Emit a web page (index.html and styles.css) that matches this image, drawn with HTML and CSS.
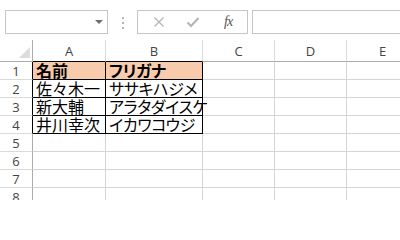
FILE: index.html
```html
<!DOCTYPE html>
<html lang="ja">
<head>
<meta charset="utf-8">
<link rel="stylesheet" href="styles.css">
</head>
<body>
<div class="toolbar">
  <div class="namebox"><span class="caret"></span></div>
  <div class="dots"><i></i><i></i><i></i></div>
  <div class="btns">
    <svg class="ico" width="12" height="12" viewBox="0 0 12 12"><path d="M1.5 1.5 L10.5 10.5 M10.5 1.5 L1.5 10.5" stroke="#b4b4b4" stroke-width="1.3" fill="none"/></svg>
    <svg class="ico chk" width="14" height="12" viewBox="0 0 14 12"><path d="M1.5 6.5 L5 10 L12.5 2" stroke="#b4b4b4" stroke-width="2" fill="none"/></svg>
    <span class="fx">fx</span>
  </div>
  <div class="formula"></div>
</div>
<div class="sheet">
  <div class="corner"><span class="tri"></span></div>
  <div class="ch bb">A</div>
  <div class="ch bb">B</div>
  <div class="ch">C</div>
  <div class="ch">D</div>
  <div class="ch">E</div>

  <div class="rh br">1</div>
  <div class="c b hd">名前</div>
  <div class="c b hd kana">フリガナ</div>
  <div class="c"></div><div class="c"></div><div class="c"></div>

  <div class="rh br">2</div>
  <div class="c b">佐々木一</div>
  <div class="c b kana">ササキハジメ</div>
  <div class="c"></div><div class="c"></div><div class="c"></div>

  <div class="rh br">3</div>
  <div class="c b">新大輔</div>
  <div class="c b kana">アラタダイスケ</div>
  <div class="c"></div><div class="c"></div><div class="c"></div>

  <div class="rh br">4</div>
  <div class="c b">井川幸次</div>
  <div class="c b kana">イカワコウジ</div>
  <div class="c"></div><div class="c"></div><div class="c"></div>

  <div class="rh">5</div>
  <div class="c"></div><div class="c"></div><div class="c"></div><div class="c"></div><div class="c"></div>
  <div class="rh">6</div>
  <div class="c"></div><div class="c"></div><div class="c"></div><div class="c"></div><div class="c"></div>
  <div class="rh">7</div>
  <div class="c"></div><div class="c"></div><div class="c"></div><div class="c"></div><div class="c"></div>
  <div class="rh">8</div>
  <div class="c"></div><div class="c"></div><div class="c"></div><div class="c"></div><div class="c"></div>
</div>
</body>
</html>
```
FILE: styles.css
```css
html, body {
  margin: 0;
  padding: 0;
  background: #ffffff;
  overflow: hidden;
  width: 400px;
  height: 200px;
}
.toolbar {
  height: 40px;
  display: flex;
  align-items: flex-start;
  padding-top: 10px;
  box-sizing: border-box;
}
.namebox {
  margin-left: 5px;
  width: 103px;
  height: 24px;
  box-sizing: border-box;
  border: 1px solid #c6c6c6;
  position: relative;
}
.caret {
  position: absolute;
  left: 89px;
  top: 9px;
  width: 0;
  height: 0;
  border-left: 4px solid transparent;
  border-right: 4px solid transparent;
  border-top: 4px solid #6d6d6d;
}
.dots {
  width: 29px;
  display: flex;
  flex-direction: column;
  align-items: center;
  gap: 3px;
  padding-top: 7px;
  box-sizing: border-box;
}
.dots i {
  display: block;
  width: 2px;
  height: 2px;
  background: #b5b5b5;
}
.btns {
  width: 111px;
  height: 24px;
  box-sizing: border-box;
  border: 1px solid #c6c6c6;
  display: flex;
  align-items: center;
  padding-left: 15px;
}
.ico { display: block; }
.chk { margin-left: 21px; }
.fx {
  margin-left: 24px;
  font-family: "Liberation Serif", serif;
  font-style: italic;
  font-size: 14px;
  color: #555555;
  letter-spacing: -1px;
}
.formula {
  margin-left: 4px;
  flex: 1;
  height: 24px;
  box-sizing: border-box;
  border: 1px solid #c6c6c6;
  border-right: none;
}
.sheet {
  display: grid;
  grid-template-columns: 33px 73px 97px 72px 72px 72px;
  grid-template-rows: 22px repeat(8, 18px);
  font-family: "Noto Sans CJK JP", sans-serif;
}
.sheet > div { box-sizing: border-box; }
.corner {
  border-right: 1px solid #ababab;
  border-bottom: 1px solid #ababab;
  position: relative;
}
.tri {
  position: absolute;
  right: 2px;
  bottom: 3px;
  width: 0;
  height: 0;
  border-left: 11px solid transparent;
  border-bottom: 11px solid #dcdcdc;
}
.ch {
  border-right: 1px solid #dadada;
  border-bottom: 1px solid #ababab;
  font-family: "Open Sans", "Liberation Sans", sans-serif;
  font-size: 13px;
  color: #444444;
  display: flex;
  align-items: center;
  justify-content: center;
  padding-top: 1px;
}
.rh {
  border-right: 1px solid #ababab;
  border-bottom: 1px solid #dadada;
  font-family: "Open Sans", "Liberation Sans", sans-serif;
  font-size: 13px;
  color: #444444;
  display: flex;
  align-items: center;
  justify-content: center;
}
.c {
  border-right: 1px solid #d4d4d4;
  border-bottom: 1px solid #d4d4d4;
  font-size: 16px;
  line-height: 17px;
  color: #000000;
  padding-left: 3px;
  white-space: nowrap;
}
.kana {
  font-feature-settings: "palt";
  letter-spacing: -0.3px;
}
.c.b {
  border-right-color: #000000;
  border-bottom-color: #000000;
}
.ch.bb { border-bottom-color: #000000; }
.rh.br { border-right-color: #000000; }
.hd {
  background: #f8cbad;
  font-weight: bold;
}
```
